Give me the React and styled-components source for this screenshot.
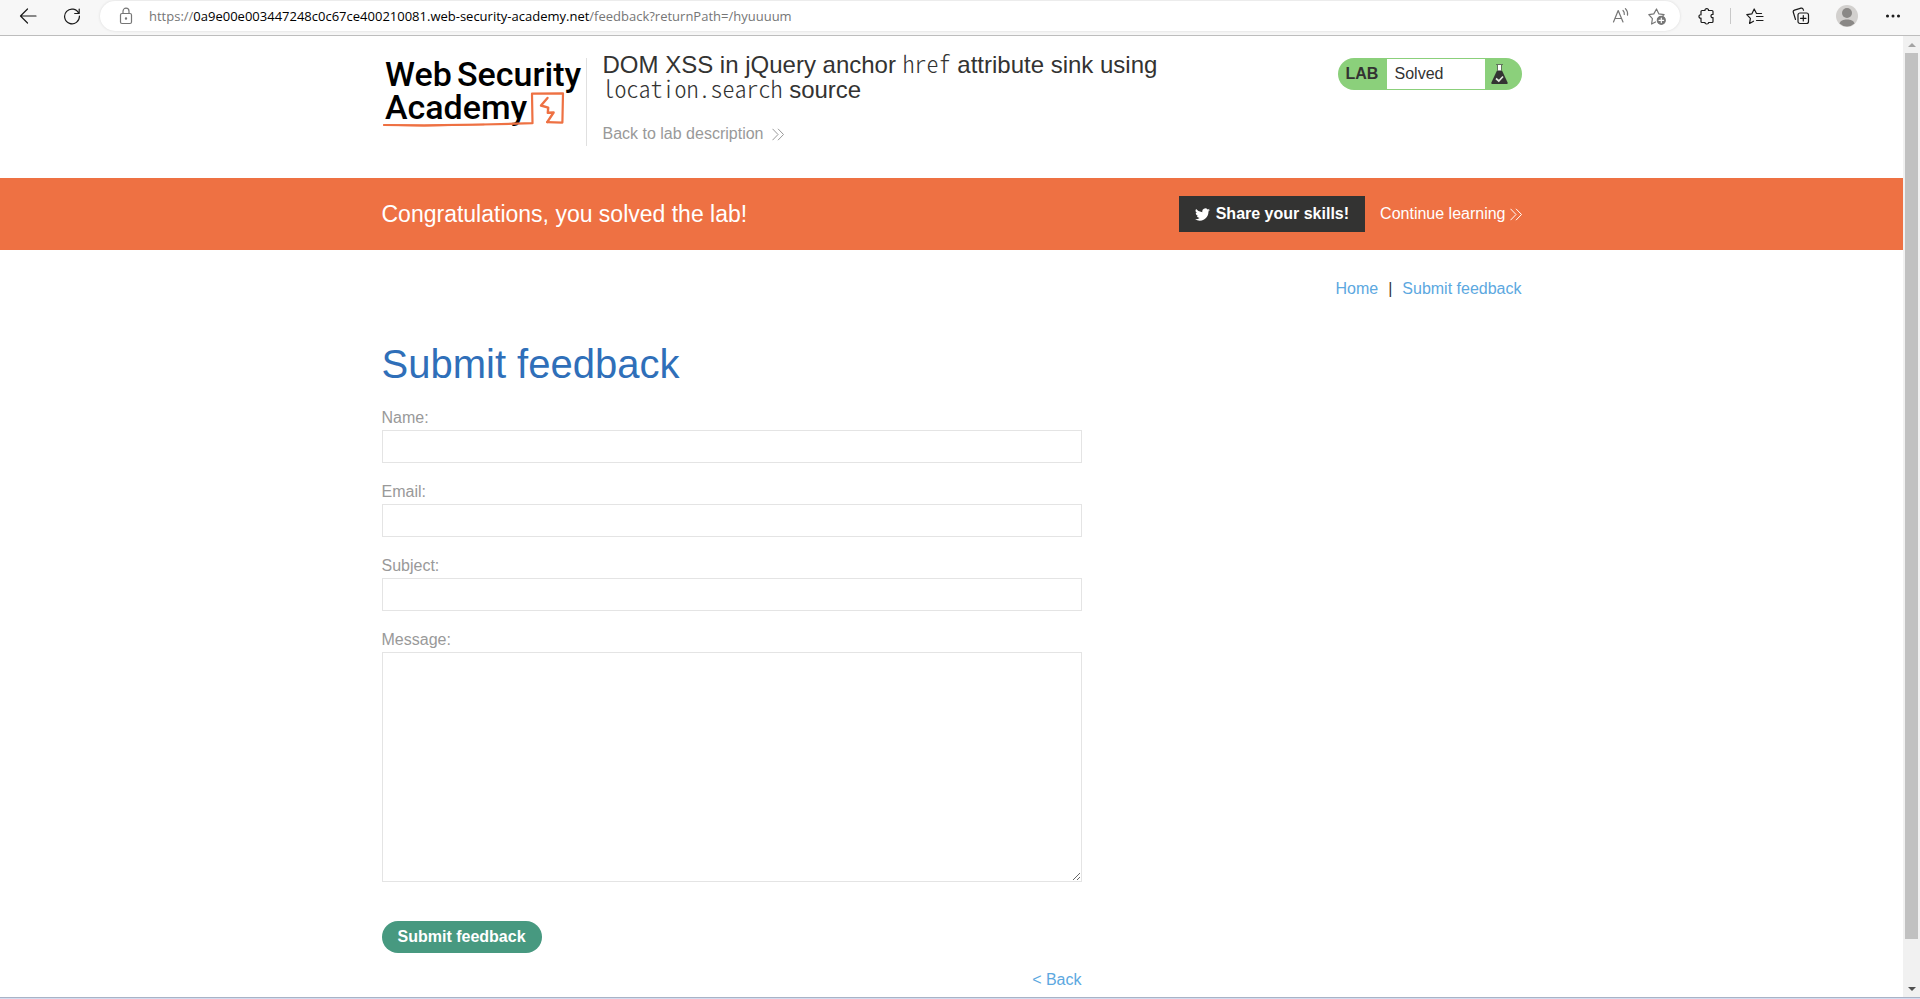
import React from 'react'
import styled, { createGlobalStyle } from 'styled-components'

const colors = {
  orange: '#ee7143',
  dark: '#333332',
  blue: '#2f6fb9',
  link: '#5ca8df',
  gray: '#999999',
  border: '#e4e4e4',
  green: '#479980',
  lightGreen: '#8bd07b'
}

const FIELDS = [
  { id: 'name', label: 'Name:', type: 'text' },
  { id: 'email', label: 'Email:', type: 'email' },
  { id: 'subject', label: 'Subject:', type: 'text' }
]

const GlobalStyle = createGlobalStyle`
  * {
    box-sizing: border-box;
  }
  body {
    margin: 0;
    background: white;
    color: ${colors.dark};
    font-family: 'Liberation Sans', Arial, sans-serif;
    font-size: 16px;
    line-height: 20px;
  }
  a {
    text-decoration: none;
  }
`

const Window = styled.div`
  display: flex;
  flex-direction: column;
  height: 100vh;
  overflow: hidden;
  border-bottom: 1px solid #d5dcf0;
`

/* browser toolbar */

const Toolbar = styled.div`
  display: flex;
  flex: none;
  align-items: center;
  height: 36px;
  padding: 0 5px 4px 6px;
  background: #f7f7f7;
  border-bottom: 1px solid #bdbdbd;
`
const ToolButton = styled.button`
  display: flex;
  align-items: center;
  justify-content: center;
  width: ${({ $narrow }) => ($narrow ? '36px' : '44px')};
  height: 30px;
  padding: 0;
  border: 0;
  background: none;
  color: ${({ $muted }) => ($muted ? '#767676' : '#1b1b1b')};
`
const ToolGroup = styled.div`
  display: flex;
  align-items: center;
  gap: 2px;
  padding-left: 4px;
`
const ToolDivider = styled.span`
  width: 1px;
  height: 16px;
  background: #c8c8c8;
`
const AddressBar = styled.div`
  display: flex;
  flex: 1;
  align-items: center;
  height: 30px;
  margin-left: 6px;
  padding: 0 5px 0 8px;
  border-radius: 15px;
  background: white;
  box-shadow: 0 0 3px rgba(0, 0, 0, 0.12);
`
const Url = styled.div`
  flex: 1;
  padding-left: 5px;
  color: #767676;
  font-family: 'Open Sans', 'Noto Sans', sans-serif;
  font-size: 13px;
  white-space: nowrap;
`
const Host = styled.span`
  color: black;
`

/* page frame */

const Viewport = styled.div`
  display: flex;
  flex: 1;
  min-height: 0;
  border-bottom: 1px solid #a9b3c6;
`
const Page = styled.div`
  flex: 1;
  min-width: 0;
  overflow: hidden;
`
const Scrollbar = styled.div`
  display: flex;
  flex-direction: column;
  width: 17px;
  padding: 0 2px;
  background: #f1f1f1;
`
const ScrollArrow = styled.button`
  display: flex;
  align-items: center;
  justify-content: center;
  height: 17px;
  padding: 0;
  border: 0;
  background: none;
  color: ${({ $disabled }) => ($disabled ? '#a3a3a3' : '#505050')};
`
const ScrollTrack = styled.div`
  flex: 1;
  padding-bottom: 41px;
`
const ScrollThumb = styled.div`
  height: 100%;
  background: #c1c1c1;
`
const Container = styled.div`
  width: 100%;
  max-width: 1140px;
  margin: 0 auto;
`

/* lab header */

const HeaderRow = styled(Container)`
  display: flex;
  align-items: flex-start;
  padding: 22px 0 32px;
`
const LogoLink = styled.a`
  display: block;
  height: 88px;
  padding-right: 4px;
  border-right: 1px solid #e0e0e0;
`
const TitleBlock = styled.div`
  max-width: 600px;
  padding-left: 16px;
`
const LabTitle = styled.h2`
  margin: -6px 0 22px;
  font-size: 24px;
  font-weight: 400;
  line-height: 25px;
`
const Code = styled.code`
  font-family: 'Noto Sans CJK JP', 'Liberation Mono', monospace;
  font-size: 24px;
  font-weight: 300;
  font-feature-settings: 'hwid';
  line-height: 0;
`
const ArrowLink = styled.a`
  display: inline-flex;
  align-items: center;
  gap: ${({ $light }) => ($light ? '4px' : '9px')};
  color: ${({ $light }) => ($light ? 'white' : colors.gray)};
`
const LabStatus = styled.div`
  display: flex;
  align-items: center;
  height: 32px;
  margin-left: auto;
  padding: 1px 0;
  border-radius: 16px;
  background: ${colors.lightGreen};
`
const LabTag = styled.span`
  width: 49px;
  padding-left: 8px;
  font-weight: 700;
`
const LabState = styled.span`
  width: 98px;
  height: 30px;
  padding-left: 8px;
  background: white;
  line-height: 30px;
`
const LabFlask = styled.span`
  display: flex;
  width: 37px;
  padding-left: 6px;
`

/* solved banner */

const Banner = styled.section`
  background: ${colors.orange};
  color: white;
`
const BannerRow = styled(Container)`
  display: flex;
  align-items: center;
  gap: 15px;
  height: 72px;
`
const BannerTitle = styled.h4`
  flex: 1;
  margin: 0;
  font-size: 23px;
  font-weight: 400;
`
const ShareButton = styled.button`
  display: flex;
  align-items: center;
  gap: 6px;
  height: 36px;
  padding: 0 16px;
  border: 0;
  background: ${colors.dark};
  color: white;
  font: inherit;
  font-weight: 700;
`

/* feedback form */

const Nav = styled.nav`
  display: flex;
  justify-content: flex-end;
  gap: 10px;
  padding-top: 29px;
`
const TextLink = styled.a`
  color: ${colors.link};
`
const PageTitle = styled.h1`
  margin: 42px 0 21px;
  color: ${colors.blue};
  font-size: 40px;
  font-weight: 400;
  line-height: 46px;
`
const FormColumn = styled.div`
  max-width: 700px;
`
const Label = styled.label`
  display: block;
  padding-bottom: 2px;
  color: ${colors.gray};
`
const Input = styled.input`
  display: block;
  width: 100%;
  height: 33px;
  margin-bottom: 19px;
  padding: 4px 8px;
  border: 1px solid ${colors.border};
  font: inherit;
`
const TextArea = styled.textarea`
  display: block;
  width: 100%;
  height: 230px;
  margin-bottom: 39px;
  padding: 4px 8px;
  border: 1px solid ${colors.border};
  font: inherit;
  resize: both;
`
const SubmitButton = styled.button`
  height: 32px;
  padding: 0 16px;
  border: 0;
  border-radius: 16px;
  background: ${colors.green};
  color: white;
  font: inherit;
  font-weight: 700;
`
const BackRow = styled.div`
  display: flex;
  justify-content: flex-end;
  padding-top: 17px;
`

const LogoSvg = styled.svg`
  display: block;
  overflow: visible;
`
const LogoText = styled.text`
  font-family: Roboto, sans-serif;
  font-size: 34px;
  font-weight: 500;
`

function Icon ({ size = 18, children }) {
  return (
    <svg
      width={size}
      height={size}
      viewBox='0 0 18 18'
      fill='none'
      stroke='currentColor'
      strokeWidth='1.2'
      strokeLinecap='round'
      strokeLinejoin='round'
      aria-hidden='true'
    >
      {children}
    </svg>
  )
}

function Chevrons () {
  return (
    <svg width='12' height='13' viewBox='0 0 12 13' fill='none' stroke='currentColor' aria-hidden='true'>
      <path d='M.5.8L6 6.500.5 12.200M6 .8l5.500 5.700L6 12.200' />
    </svg>
  )
}

function Logo () {
  return (
    <LogoSvg width='200' height='72' viewBox='0 0 200 72' role='img' aria-label='Web Security Academy'>
      <LogoText x='3' y='28'>Web</LogoText>
      <LogoText x='75' y='28'>Security</LogoText>
      <LogoText x='3' y='61'>Academy</LogoText>
      <g fill='none' stroke={colors.orange} strokeLinejoin='round' strokeLinecap='round'>
        <path d='M2 67l40 .3L100 66.500l50.500-1.300L150 35.700l31-.4-.6 29.300-15.300-.4' strokeWidth='2.200' />
        <path d='M2 67l40 .8 60-1.200' strokeWidth='1.500' />
        <path d='M165.500 40l-6.500 7.500 7.200 2.200-.4 5.100 5.800-.3-6.200 9.400' strokeWidth='2.400' />
      </g>
    </LogoSvg>
  )
}

function Flask () {
  return (
    <svg width='17' height='22' viewBox='0 0 17 22' aria-hidden='true'>
      <path d='M5 1.500h7M6.500 2v5M10.500 2v5' stroke='#62745d' fill='none' />
      <path d='M7 2h3v6H7z' fill='#fff' />
      <path d='M6 7.500h5l5.600 12c.3.900 0 1.500-1 1.500H1.400c-1 0-1.300-.6-1-1.500z' fill={colors.dark} />
      <path d='M5 15.500l2.800 2.500 4.200-4.500' fill='none' stroke='#dfe8dc' strokeWidth='1.700' />
    </svg>
  )
}

function Bird () {
  return (
    <svg width='15' height='15' viewBox='0 0 24 24' fill='currentColor' aria-hidden='true'>
      <path d='M24 4.600a10 10 0 0 1-2.800.8 5 5 0 0 0 2.100-2.700c-1 .6-2 1-3.100 1.200a4.900 4.900 0 0 0-8.400 4.500A14 14 0 0 1 1.700 3.100a4.900 4.900 0 0 0 1.500 6.600 5 5 0 0 1-2.200-.6 4.900 4.900 0 0 0 3.900 4.900 5 5 0 0 1-2.200.1 4.900 4.900 0 0 0 4.600 3.400A9.900 9.900 0 0 1 0 19.500 14 14 0 0 0 21.500 7.100 10 10 0 0 0 24 4.600z' />
    </svg>
  )
}

function BrowserToolbar () {
  return (
    <Toolbar>
      <ToolButton aria-label='Back'>
        <Icon><path d='M17 9H1.500M8.500 2L1.500 9l7 7' /></Icon>
      </ToolButton>
      <ToolButton aria-label='Refresh'>
        <Icon><path d='M15.800 6.500A7.400 7.400 0 1 0 16.400 9M16.200 2v4.500h-4.500' /></Icon>
      </ToolButton>
      <AddressBar>
        <ToolButton $narrow $muted aria-label='Site information'>
          <Icon>
            <rect x='3.500' y='6.500' width='11' height='10' rx='1.500' />
            <path d='M6 6.500V4.200a3 3 0 0 1 6 0v2.300' />
            <circle cx='9' cy='11.500' r='.6' fill='currentColor' />
          </Icon>
        </ToolButton>
        <Url>
          https://<Host>0a9e00e003447248c0c67ce400210081.web-security-academy.net</Host>/feedback?returnPath=/hyuuuum
        </Url>
        <ToolButton $narrow $muted aria-label='Read aloud'>
          <Icon>
            <path d='M1.500 15L6.200 3.500 11 15M3 11.500h6.500M11 3.500c1 1 1.500 2.400 1.300 4M13.400 1.600c1.700 1.700 2.500 4 2.100 6.600' />
          </Icon>
        </ToolButton>
        <ToolButton $narrow $muted aria-label='Add to favorites'>
          <Icon>
            <path d='M7.500 15l-3.900 2 .8-5.300L.8 7.600l5-.7L8.500 2l2.400 4.900 5.200.7-1.500 1.500' />
            <circle cx='13.300' cy='13.300' r='4' fill='currentColor' />
            <path d='M13.300 11v4.600M11 13.300h4.600' stroke='white' />
          </Icon>
        </ToolButton>
      </AddressBar>
      <ToolGroup>
        <ToolButton aria-label='Extensions'>
          <Icon>
            <path d='M5 3.500h3C7.500 1 12 1 11.500 3.500H15c.6 0 1 .4 1 1v3c-2.700-.6-2.700 3.600 0 3v4c0 .6-.4 1-1 1h-3.500c.5 2-4 2-3.500 0H5c-.6 0-1-.4-1-1v-3.300c-2.700.5-2.700-4 0-3.400V4.500c0-.6.4-1 1-1z' />
          </Icon>
        </ToolButton>
        <ToolDivider />
        <ToolButton aria-label='Favorites'>
          <Icon>
            <path d='M7.500 14.200l-3.900 2.200.8-5-3.600-3.700 5-.8L8.200 2l2.300 4.500h5M10.500 9.500h6.500M10.500 13.500h6.500' />
          </Icon>
        </ToolButton>
        <ToolButton aria-label='Collections'>
          <Icon>
            <rect x='6' y='6' width='10.500' height='10.500' rx='2' />
            <path d='M11.300 8.500v5.500M8.500 11.300H14M3.500 12.500L1.300 5.300c-.3-1 .2-1.900 1.200-2.200L9 1.200c1-.3 1.900.2 2.200 1.200l.3.900' />
          </Icon>
        </ToolButton>
        <ToolButton aria-label='Profile'>
          <svg width='22' height='22' viewBox='0 0 22 22' aria-hidden='true'>
            <circle cx='11' cy='11' r='11' fill='#d2d0ce' />
            <circle cx='11' cy='8' r='5' fill='#8a8886' />
            <path d='M3.500 18.500c1-5.500 14-5.500 15 0A11 11 0 0 1 3.500 18.500z' fill='#8a8886' />
          </svg>
        </ToolButton>
        <ToolButton aria-label='Settings and more'>
          <Icon>
            <g fill='currentColor'>
              <circle cx='3.500' cy='9' r='.9' />
              <circle cx='9' cy='9' r='.9' />
              <circle cx='14.500' cy='9' r='.9' />
            </g>
          </Icon>
        </ToolButton>
      </ToolGroup>
    </Toolbar>
  )
}

function LabHeader () {
  return (
    <HeaderRow as='header'>
      <LogoLink href='#'><Logo /></LogoLink>
      <TitleBlock>
        <LabTitle>
          DOM XSS in jQuery anchor <Code>href</Code> attribute sink using <Code>location.search</Code> source
        </LabTitle>
        <ArrowLink href='#'>Back to lab description <Chevrons /></ArrowLink>
      </TitleBlock>
      <LabStatus>
        <LabTag>LAB</LabTag>
        <LabState>Solved</LabState>
        <LabFlask><Flask /></LabFlask>
      </LabStatus>
    </HeaderRow>
  )
}

function SolvedBanner () {
  return (
    <Banner>
      <BannerRow>
        <BannerTitle>Congratulations, you solved the lab!</BannerTitle>
        <ShareButton><Bird />Share your skills!</ShareButton>
        <ArrowLink $light href='#'>Continue learning <Chevrons /></ArrowLink>
      </BannerRow>
    </Banner>
  )
}

function FeedbackForm () {
  return (
    <FormColumn>
      <form onSubmit={e => e.preventDefault()}>
        {FIELDS.map(({ id, label, type }) => (
          <React.Fragment key={id}>
            <Label htmlFor={id}>{label}</Label>
            <Input id={id} name={id} type={type} />
          </React.Fragment>
        ))}
        <Label htmlFor='message'>Message:</Label>
        <TextArea id='message' name='message' />
        <SubmitButton type='submit'>Submit feedback</SubmitButton>
      </form>
      <BackRow>
        <TextLink href='#'>&lt; Back</TextLink>
      </BackRow>
    </FormColumn>
  )
}

export default function App () {
  return (
    <Window>
      <GlobalStyle />
      <BrowserToolbar />
      <Viewport>
        <Page>
          <LabHeader />
          <SolvedBanner />
          <Container as='main'>
            <Nav>
              <TextLink href='#'>Home</TextLink>
              <span>|</span>
              <TextLink href='#'>Submit feedback</TextLink>
            </Nav>
            <PageTitle>Submit feedback</PageTitle>
            <FeedbackForm />
          </Container>
        </Page>
        <Scrollbar>
          <ScrollArrow $disabled aria-label='Scroll up'>
            <svg width='8' height='4' viewBox='0 0 8 4'><path d='M0 4l4-4 4 4z' fill='currentColor' /></svg>
          </ScrollArrow>
          <ScrollTrack><ScrollThumb /></ScrollTrack>
          <ScrollArrow aria-label='Scroll down'>
            <svg width='8' height='4' viewBox='0 0 8 4'><path d='M0 0l4 4 4-4z' fill='currentColor' /></svg>
          </ScrollArrow>
        </Scrollbar>
      </Viewport>
    </Window>
  )
}
